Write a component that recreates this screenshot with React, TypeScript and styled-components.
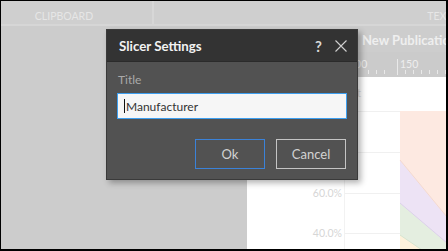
import styled, { createGlobalStyle } from "styled-components";

const GlobalStyle = createGlobalStyle`
  html, body {
    margin: 0;
    padding: 0;
    overflow: hidden;
    background: #fff;
  }
  * {
    box-sizing: border-box;
  }
`;

const UI_FONT = `Lato, "Open Sans", "Liberation Sans", sans-serif`;

const Frame = styled.div`
  position: relative;
  width: 448px;
  height: 251px;
  border: 1px solid #000;
  border-right-width: 2px;
  border-bottom-width: 2px;
  overflow: hidden;
  display: flex;
  flex-direction: column;
  background: #cccccc;
  font-family: ${UI_FONT};
`;

/* ribbon */

const Ribbon = styled.header`
  height: 25px;
  flex-shrink: 0;
  display: flex;
  background: #cfcfcf;
  border-bottom: 2px solid #d6d6d6;
`;

const RibbonGroup = styled.div<{ $width: number; $shift?: number }>`
  width: ${(p) => p.$width}px;
  flex-shrink: 0;
  display: flex;
  align-items: flex-end;
  justify-content: center;
  padding: 0 ${(p) => p.$shift ?? 0}px 1px 0;
  border-right: 2px solid #d7d7d7;
  font-size: 10.5px;
  line-height: 14px;
  color: #e6e6e6;
`;

/* workspace */

const Workspace = styled.div`
  flex: 1;
  display: flex;
  min-height: 0;
`;

const SidePanel = styled.aside`
  width: 246px;
  flex-shrink: 0;
  background: #cccccc;
`;

const Canvas = styled.main`
  flex: 1;
  display: flex;
  flex-direction: column;
  min-width: 0;
`;

const PubHeader = styled.div`
  height: 26px;
  flex-shrink: 0;
  display: flex;
  align-items: center;
  padding: 1px 0 0 115px;
  background: #cdcdcd;
  color: #efefef;
  font-size: 13px;
  font-weight: 700;
  white-space: nowrap;
`;

const RulerBar = styled.div`
  height: 25px;
  flex-shrink: 0;
  background: #cbcbcb;
`;

const ChartArea = styled.div`
  flex: 1;
  background: #ffffff;
`;

/* dialog */

const Dialog = styled.section`
  position: absolute;
  left: 105px;
  top: 28px;
  width: 252px;
  height: 151px;
  display: flex;
  flex-direction: column;
  background: #525252;
  border: 1px solid #3a3a3a;
  box-shadow: 3px 3px 6px rgba(0, 0, 0, 0.3);
`;

const TitleBar = styled.div`
  height: 32px;
  flex-shrink: 0;
  display: flex;
  align-items: center;
  padding: 0 10px 0 12px;
  background: #333333;
  border-bottom: 1px solid #2b2b2b;
  color: #f2f2f2;
`;

const DialogTitle = styled.h2`
  flex: 1;
  margin: 0;
  font-size: 13.3px;
  font-weight: 700;
`;

const HelpMark = styled.span`
  font-size: 15px;
  font-weight: 700;
  color: #d8d8d8;
  margin-right: 13px;
`;

const CloseButton = styled.button`
  width: 12px;
  height: 12px;
  padding: 0;
  border: 0;
  background: none;
  display: flex;
  align-items: center;
  justify-content: center;
`;

const DialogBody = styled.div`
  flex: 1;
  display: flex;
  flex-direction: column;
  padding: 10px;
`;

const FieldLabel = styled.label`
  height: 16px;
  margin-left: 1px;
  font-size: 12px;
  line-height: 16px;
  color: #a9a9a9;
`;

const TextField = styled.div`
  margin-top: 5px;
  height: 26px;
  display: flex;
  align-items: center;
  padding-left: 6px;
  background: #f6f6f6;
  border: 1px solid #3d9ff0;
  font-size: 12px;
  color: #333;
`;

const Caret = styled.span`
  width: 1px;
  height: 14px;
  background: #111;
  margin-right: 1px;
`;

const ButtonRow = styled.div`
  margin-top: 20px;
  display: flex;
  justify-content: flex-end;
  gap: 11px;
  padding-right: 1px;
`;

const DialogButton = styled.button<{ $primary?: boolean }>`
  width: 70px;
  height: 30px;
  padding: 0;
  background: transparent;
  border: 1px solid ${(p) => (p.$primary ? "#3b82d8" : "#c4c4c4")};
  color: #d2d2d2;
  font-family: ${UI_FONT};
  font-size: 13px;
`;

/* drawings */

const Ruler = () => {
  const minors = [368, 376, 384, 405, 413, 421, 429, 437, 445];
  return (
    <svg width="200" height="25" viewBox="0 0 200 25">
      <g stroke="#e9e9e9" strokeWidth="1">
        <line x1="100.5" y1="7" x2="100.5" y2="23" />
        <line x1="150.5" y1="7" x2="150.5" y2="23" />
        {minors.map((x) => (
          <line key={x} x1={x - 247 + 0.5} y1="18" x2={x - 247 + 0.5} y2="22" />
        ))}
      </g>
      <g fill="#eeeeee" fontSize="10.5" fontFamily={UI_FONT}>
        <text x="102" y="15.5">100</text>
        <text x="153" y="15.5">150</text>
      </g>
    </svg>
  );
};

const AreaChart = () => {
  const grid = [34.5, 75.5, 116.5, 156.5];
  const labels = ["100.0%", "80.0%", "60.0%", "40.0%"];
  return (
    <svg width="200" height="173" viewBox="0 0 200 173">
      <text x="114" y="20" textAnchor="end" fill="#dcdcdc" fontSize="11" fontFamily={UI_FONT}>
        Market Percent
      </text>
      <line x1="97.5" y1="0" x2="97.5" y2="173" stroke="#f2f2f2" />
      {grid.map((y, i) => (
        <g key={y}>
          <line x1="98" y1={y} x2="200" y2={y} stroke="#f0f0f0" />
          <text
            x="95"
            y={y + 3.5}
            textAnchor="end"
            fill="#d6d6d6"
            fontSize="10.5"
            fontFamily={UI_FONT}
          >
            {labels[i]}
          </text>
        </g>
      ))}
      <rect x="153" y="34" width="47" height="139" fill="#fde9e1" />
      <polygon points="153,83 200,140 200,173 153,173" fill="#ede3f5" />
      <polygon points="153,126 200,166 200,173 153,173" fill="#e4eee0" />
      <polygon points="153,158 200,190 200,173 153,173" fill="#fef2dc" />
      <g fill="none" strokeWidth="1">
        <line x1="153" y1="83" x2="200" y2="140" stroke="#f4d9ce" />
        <line x1="153" y1="126" x2="200" y2="166" stroke="#dcd0ea" />
        <line x1="153" y1="158" x2="200" y2="190" stroke="#d6e4d0" />
      </g>
    </svg>
  );
};

const CloseIcon = () => (
  <svg width="12" height="12" viewBox="0 0 12 12">
    <path d="M0.5 0.5 L11.5 11.5 M11.5 0.5 L0.5 11.5" stroke="#d0d0d0" strokeWidth="1.1" />
  </svg>
);

export default function App() {
  return (
    <>
      <GlobalStyle />
      <Frame>
        <Ribbon>
          <RibbonGroup $width={153} $shift={25}>
            CLIPBOARD
          </RibbonGroup>
          <RibbonGroup $width={574}>TEXT</RibbonGroup>
        </Ribbon>
        <Workspace>
          <SidePanel />
          <Canvas>
            <PubHeader>New Publication</PubHeader>
            <RulerBar>
              <Ruler />
            </RulerBar>
            <ChartArea>
              <AreaChart />
            </ChartArea>
          </Canvas>
        </Workspace>

        <Dialog>
          <TitleBar>
            <DialogTitle>Slicer Settings</DialogTitle>
            <HelpMark>?</HelpMark>
            <CloseButton aria-label="Close">
              <CloseIcon />
            </CloseButton>
          </TitleBar>
          <DialogBody>
            <FieldLabel>Title</FieldLabel>
            <TextField>
              <Caret />
              Manufacturer
            </TextField>
            <ButtonRow>
              <DialogButton $primary>Ok</DialogButton>
              <DialogButton>Cancel</DialogButton>
            </ButtonRow>
          </DialogBody>
        </Dialog>
      </Frame>
    </>
  );
}
